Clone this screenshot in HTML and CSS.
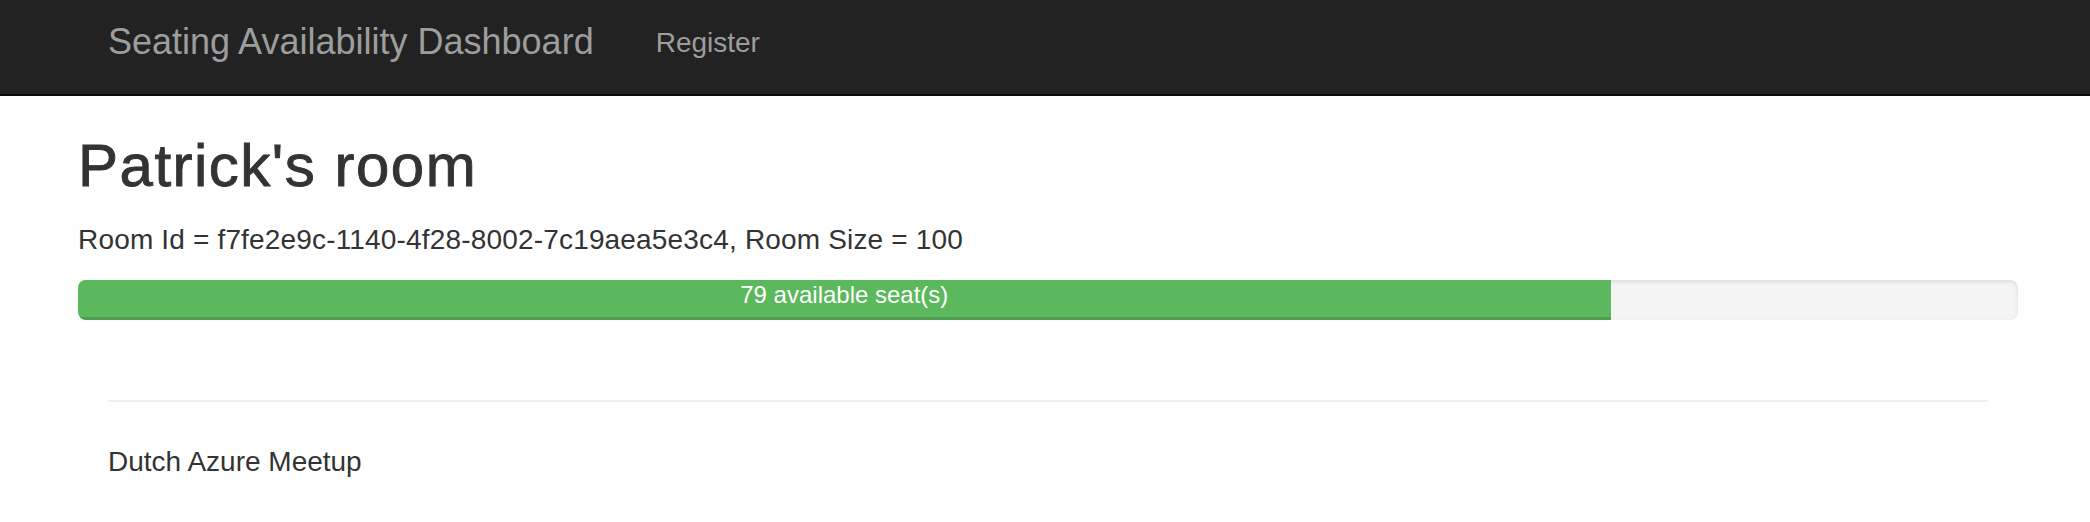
FILE: index.html
```html
<!DOCTYPE html>
<html lang="en">
<head>
<meta charset="utf-8">
<title>Seating Availability Dashboard</title>
<link rel="stylesheet" href="styles.css">
</head>
<body>
<nav class="navbar">
  <div class="nav-inner">
    <a class="brand" href="#">Seating Availability Dashboard</a>
    <a class="nav-link" href="#">Register</a>
  </div>
</nav>
<main class="container">
  <h1 class="room-title">Patrick's room</h1>
  <p class="room-meta">Room Id = f7fe2e9c-1140-4f28-8002-7c19aea5e3c4, Room Size = 100</p>
  <div class="progress">
    <div class="progress-bar" style="width: 79%">79 available seat(s)</div>
  </div>
  <section class="events">
    <hr class="divider">
    <p class="event-name">Dutch Azure Meetup</p>
  </section>
</main>
</body>
</html>
```

FILE: styles.css
```css
html, body {
  margin: 0;
  padding: 0;
  background: #fff;
  font-family: "Liberation Sans", Arial, Helvetica, sans-serif;
  color: #333;
}

.navbar {
  background: #222;
  height: 94px;
  border-bottom: 2px solid #080808;
}

.nav-inner {
  display: flex;
  align-items: flex-start;
  gap: 62px;
  padding: 22px 0 0 108px;
}

.brand {
  font-size: 36px;
  line-height: 40px;
  color: #9d9d9d;
  text-decoration: none;
}

.nav-link {
  margin-top: 1px;
  font-size: 28px;
  line-height: 40px;
  color: #9d9d9d;
  text-decoration: none;
}

.container {
  margin: 0 42px 0 48px;
  padding: 0 30px;
}

.room-title {
  margin: 37px 0 0;
  font-size: 60px;
  line-height: 66px;
  font-weight: 500;
  letter-spacing: 1.5px;
  -webkit-text-stroke: 0.9px #333;
}

.room-meta {
  margin: 21px 0 20px;
  font-size: 28px;
  line-height: 40px;
  letter-spacing: 0.17px;
}

.progress {
  height: 40px;
  background: #f4f4f4;
  border-radius: 8px;
  overflow: hidden;
  box-shadow: inset 0 2px 4px rgba(0, 0, 0, 0.1);
}

.progress-bar {
  height: 40px;
  background: #5cb85c;
  color: #fff;
  font-size: 24px;
  line-height: 30px;
  text-align: center;
  box-shadow: inset 0 -3px 0 rgba(0, 0, 0, 0.15);
}

.events {
  padding: 80px 30px 0;
}

.divider {
  margin: 0;
  border: 0;
  border-top: 2px solid #eee;
  height: 0;
}

.event-name {
  margin: 40px 0 0;
  font-size: 28px;
  line-height: 40px;
}
```
